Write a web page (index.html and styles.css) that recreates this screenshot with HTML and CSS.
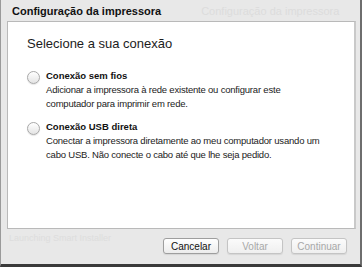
FILE: index.html
```html
<!DOCTYPE html>
<html lang="pt">
<head>
  <meta charset="UTF-8">
  <title>Configuração da impressora</title>
  <link rel="stylesheet" href="styles.css">
</head>
<body>
  <div class="window">
    <div class="titlebar">
      <span class="title">Configuração da impressora</span>
      <span class="ghost">Configuração da impressora</span>
    </div>

    <!-- Connection choice -->
    <div class="panel">
      <h1>Selecione a sua conexão</h1>

      <div class="option">
        <span class="radio"></span>
        <div class="option-text">
          <div class="option-title">Conexão sem fios</div>
          <div class="option-desc">Adicionar a impressora à rede existente ou configurar este computador para imprimir em rede.</div>
        </div>
      </div>

      <div class="option">
        <span class="radio"></span>
        <div class="option-text">
          <div class="option-title">Conexão USB direta</div>
          <div class="option-desc">Conectar a impressora diretamente ao meu computador usando um cabo USB. Não conecte o cabo até que lhe seja pedido.</div>
        </div>
      </div>
    </div>

    <div class="footer">
      <span class="status">Launching Smart Installer</span>
      <div class="buttons">
        <button class="btn">Cancelar</button>
        <button class="btn" disabled>Voltar</button>
        <button class="btn" disabled>Continuar</button>
      </div>
    </div>
  </div>
</body>
</html>
```

FILE: styles.css
```css
body {
  margin: 0;
  background: #e8e8e8;
  font-family: "Liberation Sans", Arial, sans-serif;
  color: #222;
}

.window {
  width: 362px;
  height: 267px;
  box-sizing: border-box;
  display: flex;
  flex-direction: column;
  background: #e8e8e8;
  border-left: 1px solid #9a9a9a;
  border-right: 2px solid #6e6e6e;
  border-bottom: 3px solid #3a3a3a;
}

.titlebar {
  height: 21px;
  display: flex;
  align-items: center;
  padding-left: 11px;
  font-size: 11px;
  font-weight: bold;
  color: #111;
}

.titlebar .ghost {
  margin-left: 40px;
  color: #dcdcdc;
  font-weight: normal;
}

.panel {
  height: 206px;
  margin: 0 4px 0 6px;
  background: #fff;
  border: 1px solid #b9b9b9;
  border-right: 2px solid #c9c9c9;
  padding: 0 0 0 19px;
}

h1 {
  margin: 14px 0 0;
  font-size: 13px;
  font-weight: normal;
  color: #1c1c1c;
}

.option {
  display: flex;
  margin-top: 18px;
}

.option + .option {
  margin-top: 9px;
}

.radio {
  flex: none;
  width: 11px;
  height: 11px;
  margin-top: 2px;
  border: 1px solid #a8a8a8;
  border-radius: 50%;
  background: linear-gradient(#ffffff, #e4e4e4);
  box-shadow: 0 1px 1px rgba(0, 0, 0, 0.1);
}

.option-text {
  margin-left: 6px;
  width: 280px;
  font-size: 9.5px;
  line-height: 14px;
}

.option-title {
  font-weight: bold;
  color: #111;
}

.option-desc {
  color: #222;
  letter-spacing: -0.2px;
}

.footer {
  flex: 1;
  display: flex;
  justify-content: space-between;
  padding: 4px 13px 0 8px;
}

.status {
  font-size: 9px;
  color: #dddddd;
}

.buttons {
  display: flex;
  gap: 8px;
  padding-top: 5px;
}

.btn {
  width: 56px;
  height: 16px;
  padding: 0;
  font-family: inherit;
  font-size: 10px;
  color: #111;
  border: 1px solid #9e9e9e;
  border-radius: 3px;
  background: linear-gradient(#ffffff, #ececec);
  box-shadow: 0 1px 1px rgba(0, 0, 0, 0.08);
}

.btn:disabled {
  color: #a8a8a8;
  border-color: #c4c4c4;
  background: linear-gradient(#fbfbfb, #efefef);
}
```
